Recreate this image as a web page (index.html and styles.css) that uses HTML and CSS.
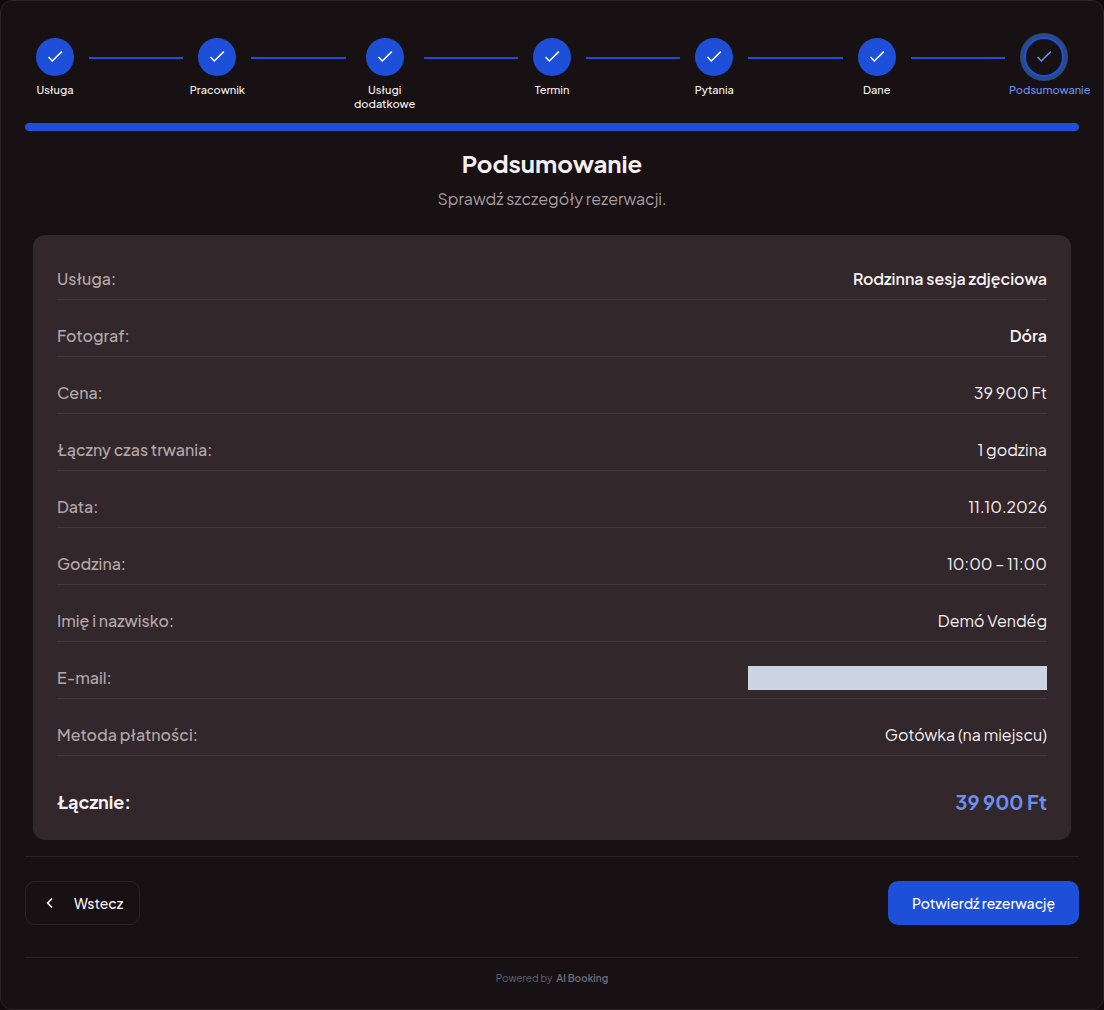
FILE: index.html
```html
<!DOCTYPE html>
<html lang="pl">
<head>
<meta charset="utf-8">
<meta name="viewport" content="width=device-width, initial-scale=1">
<title>Podsumowanie</title>
<link rel="stylesheet" href="styles.css">
</head>
<body>
<svg class="sprite" aria-hidden="true">
  <symbol id="check" viewBox="0 0 16 16"><path d="M1.5 8 5.3 12 14.8 2.6"/></symbol>
</svg>
<main class="widget">
  <ol class="steps">
    <li class="step"><span class="dot"><svg class="check"><use href="#check"/></svg></span><span class="step-label">Usługa</span></li>
    <li class="line" aria-hidden="true"></li>
    <li class="step"><span class="dot"><svg class="check"><use href="#check"/></svg></span><span class="step-label">Pracownik</span></li>
    <li class="line" aria-hidden="true"></li>
    <li class="step"><span class="dot"><svg class="check"><use href="#check"/></svg></span><span class="step-label">Usługi dodatkowe</span></li>
    <li class="line" aria-hidden="true"></li>
    <li class="step"><span class="dot"><svg class="check"><use href="#check"/></svg></span><span class="step-label">Termin</span></li>
    <li class="line" aria-hidden="true"></li>
    <li class="step"><span class="dot"><svg class="check"><use href="#check"/></svg></span><span class="step-label">Pytania</span></li>
    <li class="line" aria-hidden="true"></li>
    <li class="step"><span class="dot"><svg class="check"><use href="#check"/></svg></span><span class="step-label">Dane</span></li>
    <li class="line" aria-hidden="true"></li>
    <li class="step step-active" aria-current="step"><span class="dot"><svg class="check"><use href="#check"/></svg></span><span class="step-label">Podsumowanie</span></li>
  </ol>
  <div class="progress"><div class="progress-fill" style="width: 100%"></div></div>

  <header class="heading">
    <h1>Podsumowanie</h1>
    <p>Sprawdź szczegóły rezerwacji.</p>
  </header>

  <dl class="summary">
    <div class="row row-strong"><dt>Usługa:</dt><dd>Rodzinna sesja zdjęciowa</dd></div>
    <div class="row row-strong"><dt>Fotograf:</dt><dd>Dóra</dd></div>
    <div class="row"><dt>Cena:</dt><dd>39 900 Ft</dd></div>
    <div class="row"><dt>Łączny czas trwania:</dt><dd>1 godzina</dd></div>
    <div class="row"><dt>Data:</dt><dd>11.10.2026</dd></div>
    <div class="row"><dt>Godzina:</dt><dd>10:00 – 11:00</dd></div>
    <div class="row"><dt>Imię i nazwisko:</dt><dd>Demó Vendég</dd></div>
    <div class="row"><dt>E-mail:</dt><dd class="masked"></dd></div>
    <div class="row"><dt>Metoda płatności:</dt><dd>Gotówka (na miejscu)</dd></div>
    <div class="total"><dt>Łącznie:</dt><dd>39 900 Ft</dd></div>
  </dl>

  <div class="actions">
    <button type="button" class="btn btn-back"><svg class="chevron" viewBox="0 0 16 16" aria-hidden="true"><path d="M10 3.500 5.700 8l4.300 4.500"/></svg>Wstecz</button>
    <button type="button" class="btn btn-confirm">Potwierdź rezerwację</button>
  </div>

  <footer class="powered"><span>Powered by</span><strong>AI Booking</strong></footer>
</main>
</body>
</html>
```
FILE: styles.css
```css
* { box-sizing: border-box; }

body {
  margin: 0;
  background: #100b0d;
  color: #f5f0f1;
  font-family: "Plus Jakarta Sans", Inter, "Open Sans", sans-serif;
  font-size: 16px;
  line-height: 24px;
}

.sprite { display: none; }

.widget {
  min-height: 100vh;
  padding: 32px 24px 20px;
  border: 1px solid #2a2426;
  border-radius: 12px;
  background: #181113;
}

/* Stepper */
.steps {
  display: flex;
  align-items: flex-start;
  margin: 0;
  padding: 5px 0 0;
  list-style: none;
}

.step {
  display: flex;
  flex-direction: column;
  align-items: center;
  gap: 7px;
  min-width: 60px;
  max-width: 70px;
}

.dot {
  display: flex;
  align-items: center;
  justify-content: center;
  width: 38px;
  height: 38px;
  border-radius: 50%;
  background: #1d4fd8;
  color: #fff;
}

.check {
  width: 16px;
  height: 16px;
  fill: none;
  stroke: currentColor;
  stroke-width: 1.5;
}

.step-label {
  font-size: 11px;
  font-weight: 500;
  line-height: 14px;
  text-align: center;
}

.line {
  flex: 1;
  height: 2px;
  margin: 19px 4px 0;
  background: #1d4fd8;
}

.step-active {
  width: 70px;
  color: #6c8ff0;
}

.step-active .dot {
  width: 40px;
  height: 40px;
  margin: -1px;
  border: 2px solid #1d4fd8;
  background: #181113;
  color: #6c8ff0;
  box-shadow: 0 0 0 4px #294a85;
}

.step-active .step-label { align-self: flex-start; }

.progress {
  height: 8px;
  margin-top: 12px;
  border-radius: 4px;
  background: #32272a;
  overflow: hidden;
}

.progress-fill {
  height: 100%;
  border-radius: 4px;
  background: #1d4fd8;
}

/* Heading */
.heading {
  padding: 16px 8px 24px;
  text-align: center;
}

h1 {
  margin: 0 0 8px;
  font-size: 24px;
  font-weight: 700;
  line-height: 32px;
}

.heading p {
  margin: 0;
  color: #a79da0;
}

/* Summary card */
.summary {
  display: flex;
  flex-direction: column;
  gap: 16px;
  margin: 0 8px 16px;
  padding: 24px;
  border-radius: 12px;
  background: #32272a;
}

.row,
.total {
  display: flex;
  justify-content: space-between;
  gap: 16px;
}

.row {
  padding: 8px 0;
  border-bottom: 1px solid #43383c;
}

dt { color: #b3a8ab; font-weight: 500; }
dd { margin: 0; text-align: right; }

.row-strong dd { font-weight: 600; }

.masked {
  flex: 0 1 299px;
  background: #cbd5e1;
}

.total {
  padding-top: 16px;
  font-weight: 700;
  line-height: 28px;
}

.total dt {
  color: #f5f0f1;
  font-size: 18px;
  font-weight: 700;
}

.total dd {
  color: #6c8ff0;
  font-size: 20px;
}

/* Actions */
.actions {
  display: flex;
  justify-content: space-between;
  padding: 24px 0 32px;
  border-top: 1px solid #2a2426;
}

.btn {
  display: flex;
  align-items: center;
  height: 44px;
  border: 1px solid #2a2426;
  border-radius: 10px;
  color: #f5f0f1;
  font: inherit;
  font-size: 14px;
  font-weight: 500;
  cursor: pointer;
}

.btn-back {
  gap: 16px;
  padding: 0 16px;
  background: transparent;
}

.chevron {
  width: 16px;
  height: 16px;
  fill: none;
  stroke: currentColor;
  stroke-width: 1.7;
}

.btn-confirm {
  padding: 0 24px;
  border: 0;
  background: #1d4fd8;
  color: #fff;
}

/* Footer */
.powered {
  display: flex;
  justify-content: center;
  gap: 4px;
  padding-top: 12px;
  border-top: 1px solid #1f2732;
  color: #636370;
  font-size: 10px;
  line-height: 16px;
}

.powered strong {
  color: #6b6b78;
  font-weight: 600;
}
```
